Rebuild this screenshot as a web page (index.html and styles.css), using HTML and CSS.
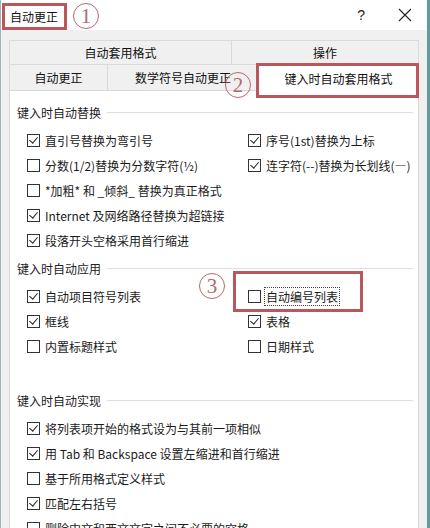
FILE: index.html
```html
<!DOCTYPE html>
<html lang="zh-CN">
<head>
    <meta charset="UTF-8">
    <title>自动更正</title>
    <link rel="stylesheet" href="styles.css">
</head>
<body>
    <div class="window">
        <div class="titlebar">
            <span class="title">自动更正</span>
            <span class="num">1</span>
            <span class="spacer"></span>
            <span class="help">?</span>
            <span class="close">
                <svg width="14" height="14" viewBox="0 0 14 14"><path d="M1 1 L13 13 M13 1 L1 13" stroke="#222" stroke-width="1.1" fill="none"/></svg>
            </span>
        </div>

        <div class="body">
            <div class="tabs">
                <div class="tab-row">
                    <div class="tab wide">自动套用格式</div>
                    <div class="tab rest">操作</div>
                </div>
                <div class="tab-row">
                    <div class="tab t1">自动更正</div>
                    <div class="tab t2">数学符号自动更正</div>
                    <div class="tab active">键入时自动套用格式<span class="num num-tab">2</span></div>
                </div>
            </div>

            <div class="panel">
                <div class="section">
                    <div class="heading"><span>键入时自动替换</span></div>
                    <div class="grid">
                        <label class="item"><span class="box on"></span>直引号替换为弯引号</label>
                        <label class="item"><span class="box on"></span>序号(1st)替换为上标</label>
                        <label class="item"><span class="box"></span>分数(1/2)替换为分数字符(½)</label>
                        <label class="item"><span class="box on"></span>连字符(--)替换为长划线(—)</label>
                        <label class="item full"><span class="box"></span>*加粗* 和 _倾斜_ 替换为真正格式</label>
                        <label class="item full"><span class="box on"></span>Internet 及网络路径替换为超链接</label>
                        <label class="item full"><span class="box on"></span>段落开头空格采用首行缩进</label>
                    </div>
                </div>

                <div class="section tall">
                    <div class="heading"><span>键入时自动应用</span></div>
                    <div class="grid">
                        <label class="item"><span class="box on"></span>自动项目符号列表</label>
                        <label class="item marked"><span class="box"></span><span class="focus">自动编号列表</span><span class="num num-item">3</span></label>
                        <label class="item"><span class="box on"></span>框线</label>
                        <label class="item"><span class="box on"></span>表格</label>
                        <label class="item"><span class="box"></span>内置标题样式</label>
                        <label class="item"><span class="box"></span>日期样式</label>
                    </div>
                </div>

                <div class="section">
                    <div class="heading"><span>键入时自动实现</span></div>
                    <div class="grid">
                        <label class="item full"><span class="box on"></span>将列表项开始的格式设为与其前一项相似</label>
                        <label class="item full"><span class="box on"></span>用 Tab 和 Backspace 设置左缩进和首行缩进</label>
                        <label class="item full"><span class="box"></span>基于所用格式定义样式</label>
                        <label class="item full"><span class="box on"></span>匹配左右括号</label>
                        <label class="item full"><span class="box"></span>删除中文和西文文字之间不必要的空格</label>
                    </div>
                </div>
            </div>
        </div>
    </div>
</body>
</html>
```

FILE: styles.css
```css
body {
    margin: 0;
    font-family: "Noto Sans CJK SC", "Noto Sans", sans-serif;
    font-size: 12px;
    color: #1a1a1a;
    background: #fff;
}

.window {
    width: 430px;
    height: 528px;
    box-sizing: border-box;
    border-left: 1px solid #9db8ba;
    border-right: 3px solid #5f9c9f;
    overflow: hidden;
    background: #f0f0f0;
}

/* title bar */
.titlebar {
    height: 30px;
    background: #fff;
    display: flex;
    align-items: center;
}

.title {
    margin-left: 1px;
    margin-top: 3px;
    align-self: flex-start;
    height: 21px;
    line-height: 21px;
    padding: 0 6px 0 5px;
    border: 3px solid #b9575c;
    border-bottom-width: 3px;
    font-size: 12px;
    color: #111;
}

.num {
    display: inline-flex;
    justify-content: center;
    align-items: center;
    width: 24px;
    height: 24px;
    border: 1.3px solid #b46a6d;
    border-radius: 50%;
    font-family: "Liberation Serif", serif;
    font-size: 21px;
    line-height: 1;
    color: #b46a6d;
    background: transparent;
    box-sizing: content-box;
}

.titlebar .num {
    margin-left: 6px;
    margin-top: 2px;
}

.spacer {
    flex: 1;
}

.help {
    font-family: "Liberation Sans", sans-serif;
    font-size: 14px;
    color: #222;
    margin-right: 33px;
}

.close {
    display: flex;
    margin-right: 15px;
}

/* tabs */
.body {
    padding: 10px 8px 0 8px;
}

.tab-row {
    display: flex;
    height: 24px;
}

.tab-row + .tab-row {
    height: 26px;
}

.tab {
    display: flex;
    justify-content: center;
    align-items: center;
    border: 1px solid #d9d9d9;
    border-bottom: none;
    background: #f0f0f0;
    box-sizing: border-box;
    color: #111;
}

.tab + .tab {
    border-left: none;
}

.wide {
    width: 223px;
}

.rest {
    flex: 1;
}

.t1 {
    width: 99px;
}

.t2 {
    width: 151px;
}

.active {
    flex: 1;
    background: #fff;
    position: relative;
    z-index: 1;
    margin-bottom: -1px;
}

.active::after {
    content: "";
    position: absolute;
    left: -3px;
    right: -1px;
    top: -2px;
    bottom: -7px;
    border: 3px solid #b9575c;
}

.num-tab {
    position: absolute;
    left: -34px;
    top: 7px;
    z-index: 2;
}

/* content panel */
.panel {
    background: #fff;
    border: 1px solid #d9d9d9;
    height: 460px;
    padding: 11px 5px 0 7px;
}

.section {
    margin-bottom: 5px;
}

.section.tall {
    padding-bottom: 26px;
}

.heading {
    display: flex;
    align-items: center;
    height: 20px;
    color: #222;
}

.heading::after {
    content: "";
    flex: 1;
    height: 1px;
    background: #dedede;
    margin-left: 6px;
}

.grid {
    display: grid;
    grid-template-columns: 221px 1fr;
    padding: 6px 0 0 10px;
}

.item {
    display: flex;
    align-items: center;
    height: 25px;
    white-space: nowrap;
}

.item.full {
    grid-column: 1 / 3;
}

.box {
    width: 11px;
    height: 11px;
    border: 1px solid #333;
    margin-right: 5px;
    position: relative;
    flex-shrink: 0;
}

.box.on::after {
    content: "";
    position: absolute;
    left: 3px;
    top: 0px;
    width: 4px;
    height: 7px;
    border-right: 1.3px solid #222;
    border-bottom: 1.3px solid #222;
    transform: rotate(40deg);
}

.marked {
    position: relative;
}

.marked::before {
    content: "";
    position: absolute;
    left: -15px;
    width: 124px;
    top: -13px;
    bottom: -3px;
    border: 3px solid #b9575c;
}

.focus {
    outline: 1px dotted #444;
    outline-offset: 0;
    padding: 0 1px;
    margin-left: -1px;
}

.num-item {
    position: absolute;
    left: -49px;
    top: -11px;
}
```
